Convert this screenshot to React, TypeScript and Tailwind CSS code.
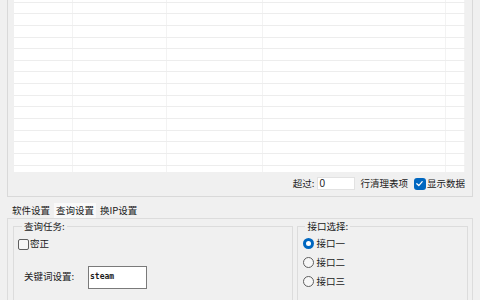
import React from 'react';

const COLS = [59, 94, 96, 183, 19];
const ROWS = Array.from({ length: 16 });

const Check = () => (
  <svg width="9" height="9" viewBox="0 0 10 10" fill="none">
    <path d="M2 5.2 L4.2 7.3 L8 3" stroke="#fff" strokeWidth="1.4" strokeLinecap="round" strokeLinejoin="round" />
  </svg>
);

const Radio = ({ on, label }: { on?: boolean; label: string }) => (
  <div className="flex items-center gap-[2px] h-[12px]">
    {on ? (
      <span className="w-[11px] h-[11px] rounded-full bg-[#0067c0] flex items-center justify-center">
        <span className="w-[5px] h-[5px] rounded-full bg-white" />
      </span>
    ) : (
      <span className="w-[11px] h-[11px] rounded-full border border-[#5f5f5f] bg-[#f7f7f7]" />
    )}
    <span>{label}</span>
  </div>
);

const App: React.FC = () => {
  return (
    <div className="w-[480px] h-[300px] overflow-hidden bg-[#f0f0f0] text-[9.5px] leading-none text-[#1a1a1a] font-['Noto_Sans_CJK_SC',sans-serif]">
      {/* result list panel */}
      <div className="mx-[7px] h-[197px] border-x border-b border-[#d9d9d9] pl-[6px] pr-[7px] flex flex-col">
        <div className="h-[172px] bg-white overflow-hidden">
          <div className="-mt-[9px]">
            {ROWS.map((_, r) => (
              <div key={r} className="flex h-[11.65px] border-b border-[#ededed]">
                {COLS.map((w, c) => (
                  <div key={c} style={{ width: w }} className="shrink-0 border-r border-[#f3f3f3]" />
                ))}
              </div>
            ))}
          </div>
        </div>
        <div className="flex-1 flex items-center justify-end pb-[1px]">
          <span>超过:</span>
          <div className="ml-[3px] w-[38px] h-[13px] bg-white border border-[#e2e2e2] flex items-center pl-[1px] text-[10px] font-['Liberation_Sans',sans-serif]">0</div>
          <span className="ml-[5px]">行清理表项</span>
          <span className="ml-[6px] w-[12px] h-[12px] rounded-[3px] bg-[#0067c0] flex items-center justify-center">
            <Check />
          </span>
          <span className="ml-[1px]">显示数据</span>
        </div>
      </div>

      {/* tabs */}
      <div className="h-[21px] flex items-end pl-[11px]">
        <div className="h-[15px] px-[1px] mr-[3px] flex items-center">软件设置</div>
        <div className="h-[15px] px-[2px] mr-[3px] bg-[#f9f9f9] flex items-center">查询设置</div>
        <div className="h-[15px] px-[1px] flex items-center">换IP设置</div>
      </div>

      {/* tab content */}
      <div className="mx-[7px] h-[90px] border-t border-x border-[#dcdcdc] bg-[#f0f0f0] flex gap-[4px] pl-[5px] pr-[4px] pt-[3px]">
        <fieldset className="w-[281px] h-[90px] border border-[#dcdcdc] px-[4px]">
          <legend className="ml-[4px] px-[2px]">查询任务:</legend>
          <label className="flex items-center gap-[1px] mt-[7px]">
            <span className="w-[11px] h-[11px] rounded-[2px] border border-[#5f5f5f] bg-[#f7f7f7]" />
            <span>密正</span>
          </label>
          <div className="flex items-center mt-[16px] pl-[6px]">
            <span className="w-[64px]">关键词设置:</span>
            <div className="w-[59px] h-[23px] bg-white border border-[#7a7a7a] flex items-center pl-[1px] text-[8px] font-bold font-['DejaVu_Sans_Mono',monospace]">steam</div>
          </div>
        </fieldset>
        <fieldset className="w-[171px] h-[90px] border border-[#dcdcdc] px-[5px]">
          <legend className="ml-[2px] px-[2px]">接口选择:</legend>
          <div className="flex flex-col gap-[7px] mt-[6px]">
            <Radio on label="接口一" />
            <Radio label="接口二" />
            <Radio label="接口三" />
          </div>
        </fieldset>
      </div>
    </div>
  );
};

export default App;
